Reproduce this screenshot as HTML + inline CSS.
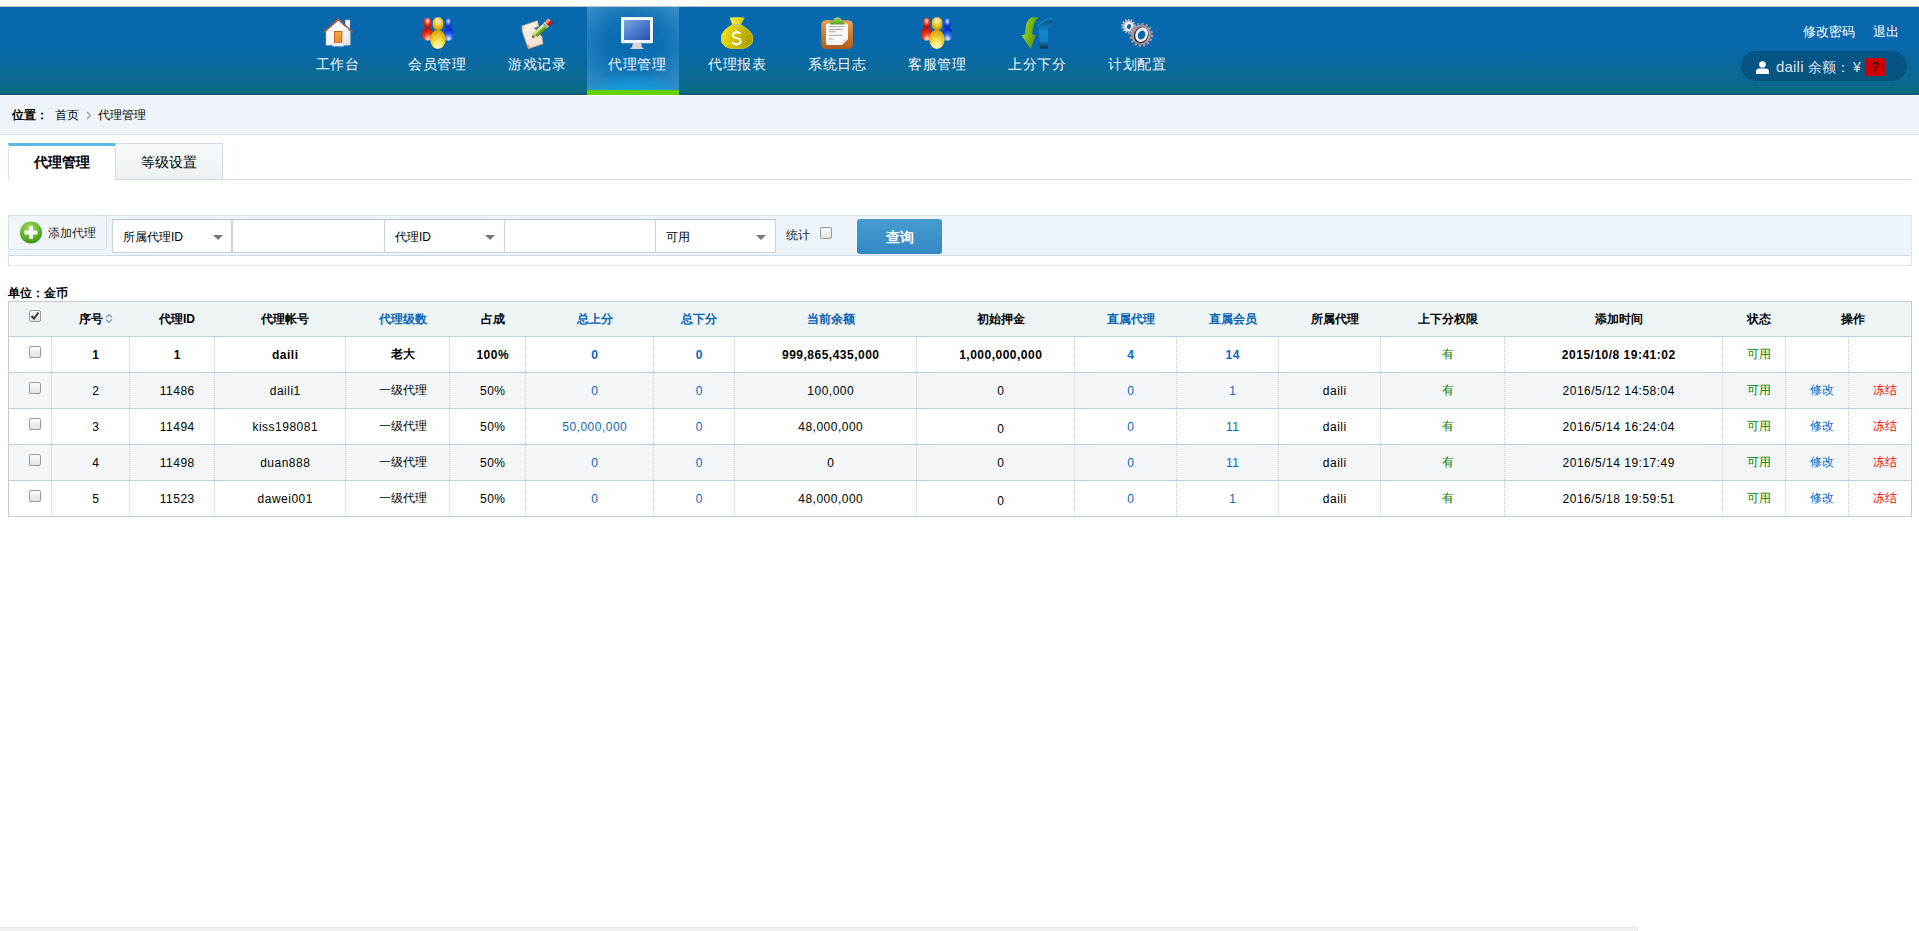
<!DOCTYPE html>
<html><head><meta charset="utf-8"><style>
*{box-sizing:border-box}
html,body{margin:0;padding:0}
body{width:1919px;height:931px;overflow:hidden;position:relative;background:#fff;font-family:"Liberation Sans",sans-serif;font-size:12px;color:#000}
#hdr{position:absolute;left:0;top:6px;width:1919px;height:89px;background:linear-gradient(to bottom,#0868ae 0%,#0868ae 40%,#0a6a8e 88%,#0b6a80 97%,#08566c 100%)}
#hdrline{position:absolute;left:0;top:6px;width:1919px;height:1px;background:#b9c3c8}
.nav{position:absolute;top:6px;width:100px;height:89px;color:#fff;font-size:14px}
.nav svg{position:absolute;left:34px;top:11px;width:32px;height:32px}
.nav span{position:absolute;left:0;width:100px;top:50px;letter-spacing:.5px;text-indent:.5px;line-height:16px;text-align:center;white-space:nowrap;color:#f4f8fb}
#act{position:absolute;left:587px;top:7px;width:92px;height:88px;background:radial-gradient(ellipse 55% 28% at 50% 100%,rgba(12,168,232,.95) 0%,rgba(12,168,232,0) 100%),radial-gradient(ellipse 72% 62% at 50% 42%,rgba(8,106,176,1) 0%,rgba(8,106,176,.85) 45%,rgba(8,106,176,0) 100%),linear-gradient(to bottom,#3a92ca 0%,#2e8cc6 100%)}
#act i{position:absolute;left:0;bottom:0;width:92px;height:5px;background:#63d300}
.toplink{position:absolute;top:24px;font-size:13px;color:#fff;line-height:16px}
#pill{position:absolute;left:1741px;top:51px;width:166px;height:30px;border-radius:15px;background:rgba(3,60,100,.45)}
#crumb{position:absolute;left:0;top:96px;width:1919px;height:39px;background:#eef4fa;border-bottom:1px solid #d9e3ea}
#crumb span{position:absolute;top:11px;line-height:16px;font-size:12px;color:#000}

#tabline{position:absolute;left:8px;top:179px;width:1904px;height:1px;background:#d3dce4}
.tab{position:absolute;top:143px;height:37px;font-size:14px;line-height:16px;text-align:center;padding-top:11px}
#tab1{left:8px;width:107px;background:#fff;border-top:3px solid #5bbbe8;border-left:1px solid #dde5ec;font-weight:bold;padding-top:8px}
#tab2{left:115px;width:108px;height:36px;background:linear-gradient(#f8fafb,#edf1f4);border:1px solid #d3dce4;border-bottom:none;padding-top:10px}
#tb{position:absolute;left:8px;top:215px;width:1904px;height:51px;border:1px solid #dde5ec;border-top-color:#d6e1e9;background:#fff}
#tbin{position:absolute;left:0;top:0;width:1902px;height:40px;background:#edf4fa;border-bottom:1px solid #cfdde8}
#addbtn{position:absolute;left:8px;top:215px;width:99px;height:35px;border:1px solid #d3dde6;border-radius:3px;background:#f0f5f9}
.sel{position:absolute;top:219px;height:34px;background:#fff;border:1px solid #c9d3db;border-top-color:#b8c4cc;font-size:12px;line-height:16px;padding:9px 0 0 10px}
.sel b{position:absolute;top:15px;width:0;height:0;border-left:5px solid transparent;border-right:5px solid transparent;border-top:5px solid #777}
#qbtn{position:absolute;left:857px;top:219px;width:85px;height:35px;border-radius:3px;background:linear-gradient(#469bd0,#3489c4);color:#fff;font-weight:bold;font-size:14px;line-height:17px;text-align:center;padding-top:10px}
#unit{position:absolute;left:8px;top:285px;font-weight:bold;font-size:12px;line-height:16px}

#tbl{position:absolute;left:8px;top:301px;border-collapse:collapse;table-layout:fixed;font-size:12px}
#tbl td,#tbl th{padding:0 0 0 10px;text-align:center;white-space:nowrap;overflow:hidden}
#tbl th{height:35px;background:#eff4f7;border-top:1px solid #c9c9c9;font-weight:bold;color:#000}
#tbl th.bl{color:#0a64b4}
#tbl tr.h{border-left:1px solid #c9c9c9;border-right:1px solid #c9c9c9}
#tbl td{height:36px;border-left:1px dotted #c4ccd2}
#tbl tr.r{border-top:1px solid #bcd0da;border-left:1px solid #c9c9c9;border-right:1px solid #c9c9c9}
#tbl tr.r:last-child{border-bottom:1px solid #bcd0da}
#tbl tr.alt td{background:#f3f7fa}
#tbl td:first-child{border-left:none}
.bl{color:#0a66be}
.gr{color:#008000}
.rd{color:#ff0000}
.cb{display:inline-block;width:12px;height:12px;border:1px solid #9a9a9a;border-radius:2px;background:linear-gradient(#fcfcfc,#e2e2e2);vertical-align:middle;position:relative;top:-3px}
</style></head><body>
<div id="hdr"></div><div id="hdrline"></div><div id="act"><i></i></div>
<div class="nav" style="left:287px"><svg viewBox="0 0 32 32"><defs><linearGradient id="hw" x1="0" y1="0" x2="1" y2="1"><stop offset="0" stop-color="#fff"/><stop offset=".6" stop-color="#f6f6f6"/><stop offset="1" stop-color="#dedede"/></linearGradient><linearGradient id="hd" x1="0" y1="0" x2="0" y2="1"><stop offset="0" stop-color="#f0a848"/><stop offset="1" stop-color="#e88a30"/></linearGradient></defs>
<rect x="24.3" y="3" width="4.6" height="9" fill="#fbfbfb" stroke="#d8c8c0" stroke-width=".4"/>
<path d="M5 14.5 L17.3 3.5 L29.3 14.5 L29.3 28.2 L5 28.2 Z" fill="url(#hw)" stroke="#c8b8b0" stroke-width=".5"/>
<path d="M1.8 15 L17.3 1 L32.6 15 L32.6 16.6 L17.3 3.2 L1.8 16.6 Z" fill="#b0583a"/>
<rect x="12" y="13" width="10.6" height="14" fill="#fafafa"/>
<rect x="13" y="14" width="8.4" height="11.8" fill="#c8641c"/><rect x="14" y="15" width="6.4" height="10" fill="url(#hd)"/>
<path d="M12.2 26.3 L22.2 26.3 L23 29.2 L11.5 29.2 Z" fill="#f4f4f4" stroke="#bbb" stroke-width=".4"/></svg><span>工作台</span></div>
<div class="nav" style="left:387px"><svg viewBox="0 0 32 32"><defs>
<radialGradient id="prb" cx=".55" cy=".85" r=".8"><stop offset="0" stop-color="#ffe8d8"/><stop offset=".45" stop-color="#f04020"/><stop offset="1" stop-color="#c80800"/></radialGradient>
<radialGradient id="prh" cx=".5" cy=".3" r=".7"><stop offset="0" stop-color="#fff0f0"/><stop offset=".5" stop-color="#f04020"/><stop offset="1" stop-color="#b00800"/></radialGradient>
<radialGradient id="pbb" cx=".5" cy=".85" r=".8"><stop offset="0" stop-color="#e8f4ff"/><stop offset=".45" stop-color="#3070f0"/><stop offset="1" stop-color="#0020d0"/></radialGradient>
<radialGradient id="pbh" cx=".5" cy=".3" r=".7"><stop offset="0" stop-color="#e0f0ff"/><stop offset=".5" stop-color="#2a60e8"/><stop offset="1" stop-color="#0020c0"/></radialGradient>
<radialGradient id="pyb" cx=".5" cy=".85" r=".85"><stop offset="0" stop-color="#fffce0"/><stop offset=".4" stop-color="#f8e048"/><stop offset="1" stop-color="#d89800"/></radialGradient>
<radialGradient id="pyh" cx=".5" cy=".3" r=".75"><stop offset="0" stop-color="#fff8e0"/><stop offset=".55" stop-color="#f0c020"/><stop offset="1" stop-color="#d08c00"/></radialGradient></defs>
<ellipse cx="6.5" cy="17" rx="5.6" ry="6.8" fill="url(#prb)"/><rect x="3" y="1" width="7.2" height="9.8" rx="3.4" fill="url(#prh)"/>
<ellipse cx="27.6" cy="17.3" rx="5.2" ry="6.5" fill="url(#pbb)"/><rect x="23.9" y="1.4" width="6.8" height="9.6" rx="3.3" fill="url(#pbh)"/>
<ellipse cx="16.9" cy="22.4" rx="7.7" ry="9.6" fill="url(#pyb)"/><rect x="11.8" y="0.3" width="10.5" height="12.8" rx="5" fill="url(#pyh)"/></svg><span>会员管理</span></div>
<div class="nav" style="left:487px"><svg viewBox="0 0 32 32"><defs><linearGradient id="sc1" x1="0" y1="0" x2="1" y2="1"><stop offset="0" stop-color="#fff8f0"/><stop offset="1" stop-color="#f0dccb"/></linearGradient><linearGradient id="pg" x1="0" y1="0" x2="0" y2="1"><stop offset="0" stop-color="#d8f0a0"/><stop offset=".45" stop-color="#90c030"/><stop offset="1" stop-color="#4a8010"/></linearGradient><linearGradient id="pr2" x1="0" y1="0" x2="0" y2="1"><stop offset="0" stop-color="#ffb0a0"/><stop offset=".5" stop-color="#e02818"/><stop offset="1" stop-color="#a01008"/></linearGradient></defs>
<path d="M1.2 13.8 L1 9 L16.5 3.8 L17.4 9.4 L13 11 L20.8 19.5 L22 26.8 L7.5 31.6 L5.8 27.5 Z" fill="url(#sc1)" stroke="#e0b08c" stroke-width=".8" stroke-linejoin="round"/>
<path d="M1 9 Q3 8 3.5 11 Q3.6 13.5 1.2 13.8" fill="#e8c4a8"/><path d="M5.8 27.5 Q8.5 26.8 8.6 29.5 Q8.4 31.6 7.5 31.6" fill="#d8a888"/>
<g transform="translate(10.9 20.8) rotate(-42)"><path d="M0 0 L2.6 -1.6 L2.6 1.6 Z" fill="#303030"/><path d="M2.6 -1.6 L4.6 -3 L4.6 3 L2.6 1.6 Z" fill="#b8d070"/><rect x="4.6" y="-3" width="12.8" height="6" fill="url(#pg)"/><rect x="5" y="-1.8" width="12" height="1.1" fill="#e8f8c8" opacity=".8"/><rect x="17.4" y="-3.1" width="2.8" height="6.2" fill="#ececec"/><rect x="18" y="-3.1" width=".8" height="6.2" fill="#606060"/><rect x="20.2" y="-3.2" width="5.6" height="6.4" rx="1" fill="url(#pr2)"/><rect x="21" y="-1.8" width="4" height="1" fill="#ffd0c8" opacity=".7"/></g></svg><span>游戏记录</span></div>
<div class="nav" style="left:587px"><svg viewBox="0 0 32 32"><defs><linearGradient id="ms" x1="0" y1="0" x2="1" y2="1"><stop offset="0" stop-color="#7aa6e0"/><stop offset=".5" stop-color="#4a7ccc"/><stop offset="1" stop-color="#2a4fa8"/></linearGradient></defs>
<rect x="0" y="0" width="32" height="26" rx="1" fill="#f6f6f6" stroke="#ddd" stroke-width=".5"/><rect x="3" y="3" width="26" height="20" fill="url(#ms)"/>
<path d="M12 26 L20 26 L21 30 L23 32 L9 32 L11 30 Z" fill="#d6d6d6"/></svg><span>代理管理</span></div>
<div class="nav" style="left:687px"><svg viewBox="0 0 32 32"><defs><linearGradient id="bg1" x1="0" y1="0" x2="1" y2=".3"><stop offset="0" stop-color="#f2e840"/><stop offset=".35" stop-color="#e0d000"/><stop offset="1" stop-color="#b0a000"/></linearGradient><linearGradient id="bg2" x1="0" y1="0" x2="1" y2="0"><stop offset="0" stop-color="#f4ec60"/><stop offset="1" stop-color="#d8c800"/></linearGradient></defs>
<path d="M11.5 7.5 C 6 11, 0 15, 0 22 C 0 29, 8 32, 16 32 C 24 32, 32 29, 32 22 C 32 15, 25 11, 19.5 7.5 Z" fill="url(#bg1)" stroke="#f0e020" stroke-width=".7"/>
<path d="M9 1 Q16 -0.6 23.2 1 L19.5 7.5 L11.5 7.5 Z" fill="url(#bg2)" stroke="#f0e020" stroke-width=".5"/>
<path d="M11.5 7.5 L19.5 7.5 Q18.5 10 15.5 12" stroke="#c0c0c0" stroke-width=".9" fill="none"/>
<path d="M19.6 16.6 Q17.5 15.2 15.4 15.3 Q11.8 15.6 11.9 18.4 Q12.1 20.6 15.5 21.1 Q19.9 21.7 19.7 24.6 Q19.4 27.1 15.4 27.1 Q12.6 27 11.1 25.4 M15.4 13.4 L15.4 15.3 M15.4 27.1 L15.4 29" stroke="#fff" stroke-width="1.9" fill="none"/></svg><span>代理报表</span></div>
<div class="nav" style="left:787px"><svg viewBox="0 0 32 32"><defs><linearGradient id="cb1" x1="0" y1="0" x2="0" y2="1"><stop offset="0" stop-color="#eea050"/><stop offset=".5" stop-color="#d07a30"/><stop offset="1" stop-color="#b05a18"/></linearGradient><linearGradient id="cg1" x1="0" y1="0" x2="0" y2="1"><stop offset="0" stop-color="#a8d870"/><stop offset="1" stop-color="#58a020"/></linearGradient></defs>
<rect x="0.3" y="3.2" width="31.6" height="28.8" rx="4.5" fill="url(#cb1)"/>
<path d="M6.9 6.4 L25 6.4 Q27 6.4 27 8.4 L27 22 L21 28 L6.9 28 Q4.9 28 4.9 26 L4.9 8.4 Q4.9 6.4 6.9 6.4 Z" fill="#f8f8f8"/>
<path d="M27 22 L21 28 L22 23 Z" fill="#dcdcdc"/>
<path d="M9 7.5 Q9 4 12 3.5 Q13.5 0.2 16.5 0.2 Q19.5 0.2 21 3.5 Q23.4 4 23.4 7.5 Z" fill="url(#cg1)"/>
<g fill="#a0a0a0"><rect x="8" y="9.2" width="15.5" height=".9"/><rect x="8" y="12" width="14" height=".9"/><rect x="8" y="14.3" width="6.5" height=".9"/><rect x="8" y="17.9" width="13" height=".9"/><rect x="8" y="21.5" width="4" height=".9"/></g></svg><span>系统日志</span></div>
<div class="nav" style="left:887px"><svg style="left:33px" viewBox="0 0 32 32"><defs>
<radialGradient id="prb" cx=".55" cy=".85" r=".8"><stop offset="0" stop-color="#ffe8d8"/><stop offset=".45" stop-color="#f04020"/><stop offset="1" stop-color="#c80800"/></radialGradient>
<radialGradient id="prh" cx=".5" cy=".3" r=".7"><stop offset="0" stop-color="#fff0f0"/><stop offset=".5" stop-color="#f04020"/><stop offset="1" stop-color="#b00800"/></radialGradient>
<radialGradient id="pbb" cx=".5" cy=".85" r=".8"><stop offset="0" stop-color="#e8f4ff"/><stop offset=".45" stop-color="#3070f0"/><stop offset="1" stop-color="#0020d0"/></radialGradient>
<radialGradient id="pbh" cx=".5" cy=".3" r=".7"><stop offset="0" stop-color="#e0f0ff"/><stop offset=".5" stop-color="#2a60e8"/><stop offset="1" stop-color="#0020c0"/></radialGradient>
<radialGradient id="pyb" cx=".5" cy=".85" r=".85"><stop offset="0" stop-color="#fffce0"/><stop offset=".4" stop-color="#f8e048"/><stop offset="1" stop-color="#d89800"/></radialGradient>
<radialGradient id="pyh" cx=".5" cy=".3" r=".75"><stop offset="0" stop-color="#fff8e0"/><stop offset=".55" stop-color="#f0c020"/><stop offset="1" stop-color="#d08c00"/></radialGradient></defs>
<ellipse cx="6.5" cy="17" rx="5.6" ry="6.8" fill="url(#prb)"/><rect x="3" y="1" width="7.2" height="9.8" rx="3.4" fill="url(#prh)"/>
<ellipse cx="27.6" cy="17.3" rx="5.2" ry="6.5" fill="url(#pbb)"/><rect x="23.9" y="1.4" width="6.8" height="9.6" rx="3.3" fill="url(#pbh)"/>
<ellipse cx="16.9" cy="22.4" rx="7.7" ry="9.6" fill="url(#pyb)"/><rect x="11.8" y="0.3" width="10.5" height="12.8" rx="5" fill="url(#pyh)"/></svg><span>客服管理</span></div>
<div class="nav" style="left:987px"><svg viewBox="0 0 32 32"><defs><linearGradient id="ag" x1="0" y1="0" x2="1" y2=".4"><stop offset="0" stop-color="#b0e040"/><stop offset=".5" stop-color="#7cba10"/><stop offset="1" stop-color="#5a9010"/></linearGradient><linearGradient id="ab" x1="0" y1="0" x2="0" y2="1"><stop offset="0" stop-color="#0a5080"/><stop offset=".45" stop-color="#128ad0"/><stop offset=".75" stop-color="#1680c0"/><stop offset="1" stop-color="#06304e"/></linearGradient></defs>
<path d="M10.7 0.3 L18.2 0.6 Q12 3 11.3 17.3 L14.8 18.2 L9.6 31.7 L0.6 18.4 L4.2 17.3 Q4.5 2 10.7 0.3 Z" fill="url(#ag)"/>
<path d="M16.9 9.2 Q22 2 31.7 1.9 L31.7 10.5 L27.7 10.5 Q26.8 10.8 26.8 14 L26.8 31.5 L18.8 31.5 L18.2 13 Q18 10.5 16.9 9.2 Z" fill="url(#ab)"/>
<path d="M16.9 9.2 Q22 2 31.7 1.9" stroke="#3ab0f0" stroke-width=".6" fill="none"/></svg><span>上分下分</span></div>
<div class="nav" style="left:1087px"><svg viewBox="0 0 32 32">
<circle cx="7.5" cy="9.2" r="5.6" fill="#c4bcc4"/><circle cx="7.5" cy="9.2" r="6.3" fill="none" stroke="#d0c8d0" stroke-width="2" stroke-dasharray="1.45 1.38"/>
<ellipse cx="7.7" cy="9.4" rx="4" ry="4.6" transform="rotate(30 7.7 9.4)" fill="#f4f4f6"/><ellipse cx="7.9" cy="9.6" rx="2" ry="2.6" transform="rotate(30 7.9 9.6)" fill="#0a68ad"/>
<circle cx="20.1" cy="17.8" r="10" fill="#a8959e"/><circle cx="20.1" cy="17.8" r="10.8" fill="none" stroke="#ab98a2" stroke-width="2.4" stroke-dasharray="2.2 2.04"/>
<ellipse cx="20.2" cy="18" rx="7" ry="8.4" transform="rotate(25 20.2 18)" fill="#1a1e28"/>
<ellipse cx="20.6" cy="17.6" rx="6.2" ry="7.6" transform="rotate(25 20.6 17.6)" fill="#eeeef2"/>
<ellipse cx="20.6" cy="18" rx="3.6" ry="4.6" transform="rotate(25 20.6 18)" fill="#0a68ad"/></svg><span>计划配置</span></div>
<div class="toplink" style="left:1803px">修改密码</div><div class="toplink" style="left:1873px">退出</div>
<div id="pill"></div>
<svg style="position:absolute;left:1756px;top:61px" width="13" height="13" viewBox="0 0 13 13"><circle cx="6.5" cy="3.5" r="3.3" fill="#fff"/><path d="M0 13 L0 10.5 Q0 7.5 3.5 7.5 L9.5 7.5 Q13 7.5 13 10.5 L13 13 Z" fill="#fff"/></svg>
<div style="position:absolute;left:1776px;top:58px;font-size:15px;line-height:17px;color:#dde6ee;white-space:nowrap;letter-spacing:.2px">daili</div><div style="position:absolute;left:1808px;top:59px;font-size:14px;line-height:17px;color:#dde6ee;white-space:nowrap">余额：</div><div style="position:absolute;left:1853px;top:59px;font-size:14px;line-height:17px;color:#dde6ee;white-space:nowrap">¥</div>
<div style="position:absolute;left:1865px;top:58px;width:20px;height:18px;border-radius:2px;background:#cc0000;color:#000;font-size:13px;line-height:18px;text-align:center">?</div>
<div id="crumb"><span style="left:12px;font-weight:bold">位置：</span><span style="left:55px">首页</span><svg style="position:absolute;left:86px;top:15px" width="6" height="9" viewBox="0 0 6 9"><path d="M1 1 L4.5 4.5 L1 8" stroke="#8fa0ac" stroke-width="1.3" fill="none"/></svg><span style="left:98px">代理管理</span></div>
<div id="tabline"></div><div class="tab" id="tab1">代理管理</div><div class="tab" id="tab2">等级设置</div>
<div id="tb"><div id="tbin"></div></div>
<div id="addbtn"><svg style="position:absolute;left:11px;top:5px" width="22" height="23" viewBox="0 0 22 23"><defs><radialGradient id="gp" cx=".45" cy=".3" r=".75"><stop offset="0" stop-color="#a6e060"/><stop offset=".7" stop-color="#56a820"/><stop offset="1" stop-color="#3c8a10"/></radialGradient></defs><circle cx="11" cy="11.5" r="11" fill="url(#gp)"/><rect x="9" y="5" width="4" height="13" fill="#fff"/><rect x="4.5" y="9.5" width="13" height="4" fill="#fff"/></svg><span style="position:absolute;left:39px;top:9px;font-size:12px;line-height:16px;color:#222">添加代理</span></div>
<div class="sel" style="left:112px;width:120px">所属代理ID<b style="left:100px"></b></div>
<div class="sel" style="left:232px;width:153px"></div>
<div class="sel" style="left:384px;width:121px">代理ID<b style="left:100px"></b></div>
<div class="sel" style="left:504px;width:152px"></div>
<div class="sel" style="left:655px;width:121px">可用<b style="left:100px"></b></div>
<div style="position:absolute;left:786px;top:227px;font-size:12px;line-height:16px;color:#222">统计</div>
<div style="position:absolute;left:820px;top:227px;width:12px;height:12px;border:1px solid #999;border-radius:2px;background:linear-gradient(#fdfdfd,#e4e4e4)"></div>
<div id="qbtn">查询</div>
<div id="unit">单位：金币</div>
<div style="position:absolute;left:0;top:927px;width:1638px;height:4px;background:#f1f1f1;border-top:1px solid #e6e6e6"></div>
<table id="tbl"><colgroup><col style="width:43px"><col style="width:78px"><col style="width:85px"><col style="width:131px"><col style="width:104px"><col style="width:76px"><col style="width:128px"><col style="width:81px"><col style="width:182px"><col style="width:158px"><col style="width:102px"><col style="width:102px"><col style="width:102px"><col style="width:124px"><col style="width:218px"><col style="width:63px"><col style="width:63px"><col style="width:63px"></colgroup><tr class="h"><th><span class="cb chk" style="top:-4px"><svg width="10" height="10" viewBox="0 0 10 10" style="position:absolute;left:0;top:0"><path d="M1.5 5 L4 7.5 L8.5 1.5" stroke="#333" stroke-width="2" fill="none"/></svg></span></th><th class="">序号<svg width="8" height="11" viewBox="0 0 8 11" style="vertical-align:middle;margin-left:2px;position:relative;top:-1px"><path d="M1 4.5 L4 1.5 L7 4.5 M1 6.5 L4 9.5 L7 6.5" stroke="#7a9ab0" stroke-width="1.2" fill="none"/></svg></th><th class="">代理ID</th><th class="">代理帐号</th><th class="bl">代理级数</th><th class="">占成</th><th class="bl">总上分</th><th class="bl">总下分</th><th class="bl">当前余额</th><th class="">初始押金</th><th class="bl">直属代理</th><th class="bl">直属会员</th><th class="">所属代理</th><th class="">上下分权限</th><th class="">添加时间</th><th class="">状态</th><th colspan="2">操作</th></tr><tr class="r"><td><span class="cb"></span></td><td class="" style="font-weight:bold;letter-spacing:.5px;text-indent:.5px">1</td><td class="" style="font-weight:bold;letter-spacing:.5px;text-indent:.5px">1</td><td class="" style="font-weight:bold;letter-spacing:.5px;text-indent:.5px">daili</td><td class="" style="font-weight:bold">老大</td><td class="" style="font-weight:bold;letter-spacing:.5px;text-indent:.5px">100%</td><td class="bl" style="font-weight:bold;letter-spacing:.5px;text-indent:.5px">0</td><td class="bl" style="font-weight:bold;letter-spacing:.5px;text-indent:.5px">0</td><td class="" style="font-weight:bold;letter-spacing:.5px;text-indent:.5px">999,865,435,000</td><td class="" style="font-weight:bold;letter-spacing:.5px;text-indent:.5px">1,000,000,000</td><td class="bl" style="font-weight:bold;letter-spacing:.5px;text-indent:.5px">4</td><td class="bl" style="font-weight:bold;letter-spacing:.5px;text-indent:.5px">14</td><td class="" style="font-weight:bold"></td><td class="gr">有</td><td class="" style="font-weight:bold;letter-spacing:.5px;text-indent:.5px">2015/10/8 19:41:02</td><td class="gr">可用</td><td class="bl" style="font-weight:bold"></td><td class="rd" style="font-weight:bold"></td></tr><tr class="r alt"><td><span class="cb"></span></td><td class="" style="letter-spacing:.5px;text-indent:.5px">2</td><td class="" style="letter-spacing:.5px;text-indent:.5px">11486</td><td class="" style="letter-spacing:.5px;text-indent:.5px">daili1</td><td class="">一级代理</td><td class="" style="letter-spacing:.5px;text-indent:.5px">50%</td><td class="bl" style="letter-spacing:.5px;text-indent:.5px">0</td><td class="bl" style="letter-spacing:.5px;text-indent:.5px">0</td><td class="" style="letter-spacing:.5px;text-indent:.5px">100,000</td><td class="" style="letter-spacing:.5px;text-indent:.5px">0</td><td class="bl" style="letter-spacing:.5px;text-indent:.5px">0</td><td class="bl" style="letter-spacing:.5px;text-indent:.5px">1</td><td class="" style="letter-spacing:.5px;text-indent:.5px">daili</td><td class="gr">有</td><td class="" style="letter-spacing:.5px;text-indent:.5px">2016/5/12 14:58:04</td><td class="gr">可用</td><td class="bl">修改</td><td class="rd">冻结</td></tr><tr class="r"><td><span class="cb"></span></td><td class="" style="letter-spacing:.5px;text-indent:.5px">3</td><td class="" style="letter-spacing:.5px;text-indent:.5px">11494</td><td class="" style="letter-spacing:.5px;text-indent:.5px">kiss198081</td><td class="">一级代理</td><td class="" style="letter-spacing:.5px;text-indent:.5px">50%</td><td class="bl" style="letter-spacing:.5px;text-indent:.5px">50,000,000</td><td class="bl" style="letter-spacing:.5px;text-indent:.5px">0</td><td class="" style="letter-spacing:.5px;text-indent:.5px">48,000,000</td><td class="" style="letter-spacing:.5px;text-indent:.5px;padding-top:4px">0</td><td class="bl" style="letter-spacing:.5px;text-indent:.5px">0</td><td class="bl" style="letter-spacing:.5px;text-indent:.5px">11</td><td class="" style="letter-spacing:.5px;text-indent:.5px">daili</td><td class="gr">有</td><td class="" style="letter-spacing:.5px;text-indent:.5px">2016/5/14 16:24:04</td><td class="gr">可用</td><td class="bl">修改</td><td class="rd">冻结</td></tr><tr class="r alt"><td><span class="cb"></span></td><td class="" style="letter-spacing:.5px;text-indent:.5px">4</td><td class="" style="letter-spacing:.5px;text-indent:.5px">11498</td><td class="" style="letter-spacing:.5px;text-indent:.5px">duan888</td><td class="">一级代理</td><td class="" style="letter-spacing:.5px;text-indent:.5px">50%</td><td class="bl" style="letter-spacing:.5px;text-indent:.5px">0</td><td class="bl" style="letter-spacing:.5px;text-indent:.5px">0</td><td class="" style="letter-spacing:.5px;text-indent:.5px">0</td><td class="" style="letter-spacing:.5px;text-indent:.5px">0</td><td class="bl" style="letter-spacing:.5px;text-indent:.5px">0</td><td class="bl" style="letter-spacing:.5px;text-indent:.5px">11</td><td class="" style="letter-spacing:.5px;text-indent:.5px">daili</td><td class="gr">有</td><td class="" style="letter-spacing:.5px;text-indent:.5px">2016/5/14 19:17:49</td><td class="gr">可用</td><td class="bl">修改</td><td class="rd">冻结</td></tr><tr class="r"><td><span class="cb"></span></td><td class="" style="letter-spacing:.5px;text-indent:.5px">5</td><td class="" style="letter-spacing:.5px;text-indent:.5px">11523</td><td class="" style="letter-spacing:.5px;text-indent:.5px">dawei001</td><td class="">一级代理</td><td class="" style="letter-spacing:.5px;text-indent:.5px">50%</td><td class="bl" style="letter-spacing:.5px;text-indent:.5px">0</td><td class="bl" style="letter-spacing:.5px;text-indent:.5px">0</td><td class="" style="letter-spacing:.5px;text-indent:.5px">48,000,000</td><td class="" style="letter-spacing:.5px;text-indent:.5px;padding-top:4px">0</td><td class="bl" style="letter-spacing:.5px;text-indent:.5px">0</td><td class="bl" style="letter-spacing:.5px;text-indent:.5px">1</td><td class="" style="letter-spacing:.5px;text-indent:.5px">daili</td><td class="gr">有</td><td class="" style="letter-spacing:.5px;text-indent:.5px">2016/5/18 19:59:51</td><td class="gr">可用</td><td class="bl">修改</td><td class="rd">冻结</td></tr></table>
</body></html>
